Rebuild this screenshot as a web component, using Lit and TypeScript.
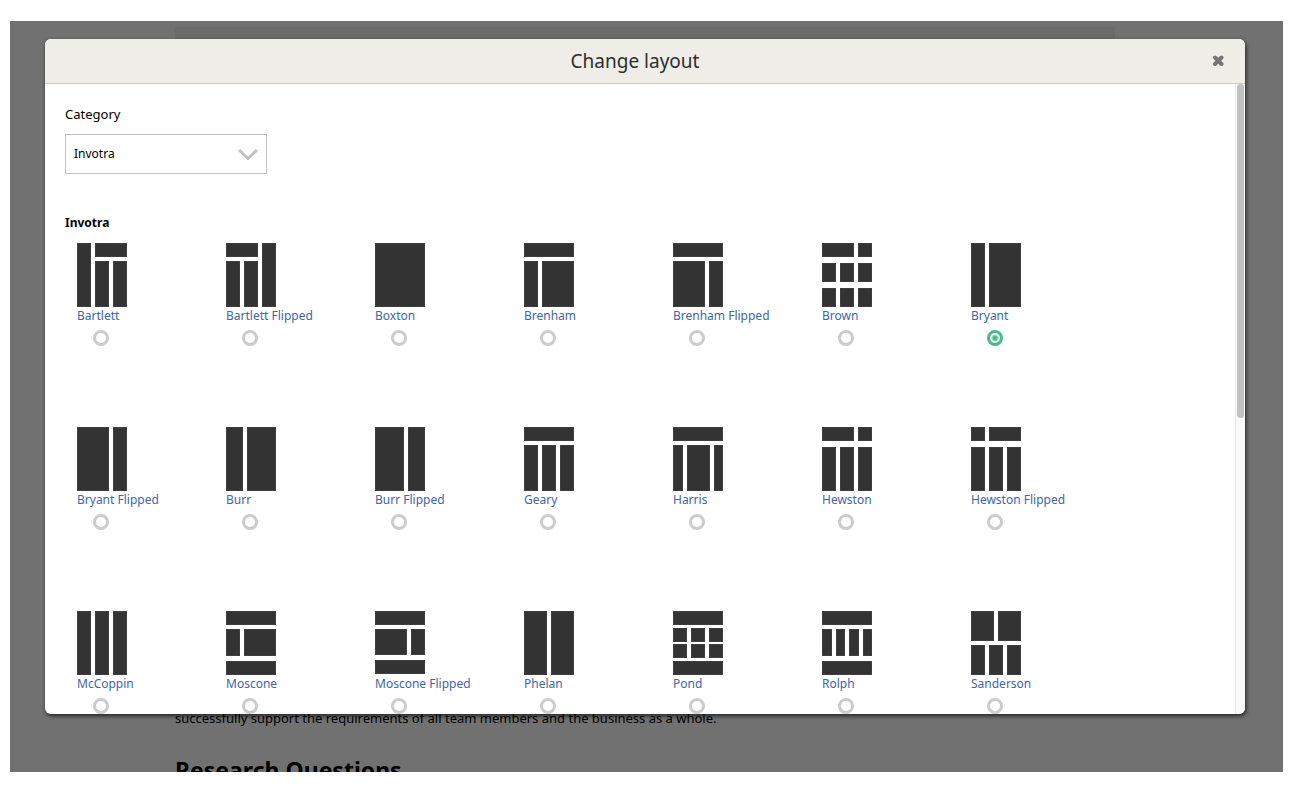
import { LitElement, html, css, svg } from "lit";
import { customElement, property, state } from "lit/decorators.js";

type Block = [x: number, y: number, width: number, height: number];

interface Layout {
  name: string;
  blocks: Block[];
}

const thirds = (y: number, height: number): Block[] => [
  [0, y, 14, height],
  [18, y, 14, height],
  [36, y, 14, height],
];
const narrowWide = (y: number, height: number): Block[] => [
  [0, y, 14, height],
  [18, y, 32, height],
];
const wideNarrow = (y: number, height: number): Block[] => [
  [0, y, 32, height],
  [36, y, 14, height],
];
const full = (y: number, height: number): Block => [0, y, 50, height];

const LAYOUTS: Layout[] = [
  { name: "Bartlett", blocks: [[0, 0, 14, 64], [18, 0, 32, 14], [18, 18, 14, 46], [36, 18, 14, 46]] },
  { name: "Bartlett Flipped", blocks: [[0, 0, 32, 14], [0, 18, 14, 46], [18, 18, 14, 46], [36, 0, 14, 64]] },
  { name: "Boxton", blocks: [full(0, 64)] },
  { name: "Brenham", blocks: [full(0, 14), ...narrowWide(18, 46)] },
  { name: "Brenham Flipped", blocks: [full(0, 14), ...wideNarrow(18, 46)] },
  { name: "Brown", blocks: [...wideNarrow(0, 14), ...thirds(20, 19), ...thirds(45, 19)] },
  { name: "Bryant", blocks: narrowWide(0, 64) },
  { name: "Bryant Flipped", blocks: wideNarrow(0, 64) },
  { name: "Burr", blocks: [[0, 0, 17, 64], [21, 0, 29, 64]] },
  { name: "Burr Flipped", blocks: [[0, 0, 29, 64], [33, 0, 17, 64]] },
  { name: "Geary", blocks: [full(0, 14), ...thirds(18, 46)] },
  { name: "Harris", blocks: [full(0, 14), [0, 18, 10, 46], [14, 18, 23, 46], [41, 18, 9, 46]] },
  { name: "Hewston", blocks: [...wideNarrow(0, 14), ...thirds(20, 44)] },
  { name: "Hewston Flipped", blocks: [...narrowWide(0, 14), ...thirds(20, 44)] },
  { name: "McCoppin", blocks: thirds(0, 64) },
  { name: "Moscone", blocks: [full(0, 14), ...narrowWide(18, 27), full(50, 14)] },
  { name: "Moscone Flipped", blocks: [full(0, 14), ...wideNarrow(18, 26), full(49, 14)] },
  { name: "Phelan", blocks: [[0, 0, 23, 64], [27, 0, 23, 64]] },
  { name: "Pond", blocks: [full(0, 14), ...thirds(17, 14), ...thirds(33, 14), full(50, 14)] },
  { name: "Rolph", blocks: [full(0, 14), [0, 18, 10, 27], [14, 18, 9, 27], [27, 18, 10, 27], [41, 18, 9, 27], full(50, 14)] },
  { name: "Sanderson", blocks: [[0, 0, 23, 30], [27, 0, 23, 30], ...thirds(34, 30)] },
];

@customElement("layout-option")
class LayoutOption extends LitElement {
  @property({ attribute: false }) layout!: Layout;
  @property({ type: Boolean }) selected = false;

  static styles = css`
    :host {
      display: block;
    }
    .option {
      display: flex;
      flex-direction: column;
      align-items: flex-start;
    }
    .label {
      display: flex;
      flex-direction: column;
      font-size: 12px;
      line-height: 18px;
      color: #4166a6;
      white-space: nowrap;
      cursor: pointer;
    }
    .thumb {
      display: block;
      width: 50px;
      height: 64px;
    }
    .block {
      fill: #333;
      stroke: #3e3e3e;
    }
    .radio {
      appearance: none;
      box-sizing: border-box;
      width: 16px;
      height: 16px;
      margin: 5px 0 0 16px;
      border: 3px solid #ccc;
      border-radius: 50%;
      background: #fff;
      cursor: pointer;
    }
    .radio:checked {
      border-color: #4dba8d;
      background: radial-gradient(circle, #4dba8d 2px, #fff 4px);
    }
  `;

  render() {
    return html`
      <div class="option">
        <label class="label" for="radio">
          <svg class="thumb" viewBox="0 0 50 64" aria-hidden="true">
            ${this.layout.blocks.map(
              ([x, y, w, h]) =>
                svg`<rect class="block" x=${x + 0.5} y=${y + 0.5} width=${w - 1} height=${h - 1}></rect>`,
            )}
          </svg>
          ${this.layout.name}
        </label>
        <input
          class="radio"
          id="radio"
          type="radio"
          name="layout"
          .checked=${this.selected}
          @change=${() => this.dispatchEvent(new CustomEvent("pick", { detail: this.layout.name }))}
        />
      </div>
    `;
  }
}

@customElement("app-root")
class AppRoot extends LitElement {
  @state() private selected = "Bryant";

  static styles = css`
    :host {
      display: block;
      box-sizing: border-box;
      height: 100vh;
      padding: 21px 12px 13px 10px;
      background: #fff;
      color: #000;
      font-family: "Noto Sans", "Open Sans", sans-serif;
    }
    .stage {
      display: grid;
      grid-template: minmax(0, 1fr) / minmax(0, 1fr);
      height: 100%;
      overflow: hidden;
      background: #717171;
    }
    .page,
    .modal {
      grid-area: 1 / 1;
    }
    .page {
      display: flex;
      flex-direction: column;
      margin: 6px 168px 0 165px;
      min-height: 0;
    }
    .panel {
      flex: 1;
      background: #6b6b6b;
    }
    .text {
      margin: 0;
      background: #717171;
      font-size: 13px;
      line-height: 24px;
    }
    .heading {
      height: 20px;
      margin: 22px 0 0;
      font-size: 23px;
      line-height: 36px;
    }
    .modal {
      display: flex;
      flex-direction: column;
      margin: 18px 38px 58px 35px;
      min-height: 0;
      border-radius: 6px;
      overflow: hidden;
      background: #fff;
      box-shadow: 1px 2px 4px rgba(0, 0, 0, 0.7);
    }
    .header {
      display: grid;
      grid-template-columns: 1fr auto 1fr;
      align-items: center;
      height: 44px;
      padding-right: 20px;
      border-bottom: 1px solid #cdcdc6;
      background: #eeede7;
    }
    .title {
      grid-column: 2;
      margin: 0;
      font-size: 19px;
      font-weight: 400;
      line-height: 28px;
      color: #2e2e2e;
    }
    .close {
      justify-self: end;
      display: block;
      padding: 0;
      border: 0;
      background: none;
      cursor: pointer;
    }
    .close-icon {
      display: block;
      width: 13px;
      height: 13px;
      fill: none;
      stroke: #757575;
      stroke-width: 4;
      stroke-linecap: round;
    }
    .body {
      display: flex;
      flex: 1;
      min-height: 0;
    }
    .content {
      flex: 1;
      overflow: hidden;
      padding: 20px;
    }
    .field-label {
      display: block;
      font-size: 13px;
      line-height: 20px;
    }
    .select-wrap {
      display: grid;
      align-items: center;
      width: 202px;
      margin-top: 10px;
    }
    .select {
      grid-area: 1 / 1;
      appearance: none;
      height: 40px;
      padding: 0 8px;
      border: 1px solid #c1c1c1;
      border-radius: 0;
      background: #fff;
      font: 12px/20px "Noto Sans", "Open Sans", sans-serif;
      color: #000;
    }
    .chevron {
      grid-area: 1 / 1;
      justify-self: end;
      width: 20px;
      height: 12px;
      margin-right: 9px;
      fill: none;
      stroke: #c1c1c1;
      stroke-width: 3;
      pointer-events: none;
    }
    .group {
      margin: 38px 0 10px;
      font-size: 12px;
      font-weight: 700;
      line-height: 21px;
    }
    .options {
      display: grid;
      grid-template-columns: repeat(auto-fill, 149px);
      grid-auto-rows: 184px;
      max-width: 1050px;
      padding-left: 12px;
    }
    .track {
      box-sizing: border-box;
      width: 10px;
      padding: 0 1px;
      border-left: 1px solid #e8e8e8;
      background: #fafafa;
    }
    .thumb {
      height: 53%;
      border-radius: 4px;
      background: #c1c1c1;
    }
  `;

  render() {
    return html`
      <div class="stage">
        <main class="page">
          <div class="panel"></div>
          <p class="text">
            successfully support the requirements of all team members and the business as a whole.
          </p>
          <h2 class="heading">Research Questions</h2>
        </main>
        <section class="modal" role="dialog" aria-labelledby="title">
          <header class="header">
            <h1 class="title" id="title">Change layout</h1>
            <button class="close" type="button" aria-label="Close">
              <svg class="close-icon" viewBox="0 0 13 13">
                <path d="M3 2.5 9.5 9M9.5 2.5 3 9"></path>
              </svg>
            </button>
          </header>
          <div class="body">
            <div class="content">
              <label class="field-label" for="category">Category</label>
              <div class="select-wrap">
                <select class="select" id="category">
                  <option>Invotra</option>
                </select>
                <svg class="chevron" viewBox="0 0 20 12" aria-hidden="true">
                  <path d="M1 2 10 10.500 19 2"></path>
                </svg>
              </div>
              <h3 class="group">Invotra</h3>
              <div class="options">
                ${LAYOUTS.map(
                  (layout) => html`
                    <layout-option
                      .layout=${layout}
                      .selected=${layout.name === this.selected}
                      @pick=${(e: CustomEvent<string>) => (this.selected = e.detail)}
                    ></layout-option>
                  `,
                )}
              </div>
            </div>
            <div class="track"><div class="thumb"></div></div>
          </div>
        </section>
      </div>
    `;
  }
}
